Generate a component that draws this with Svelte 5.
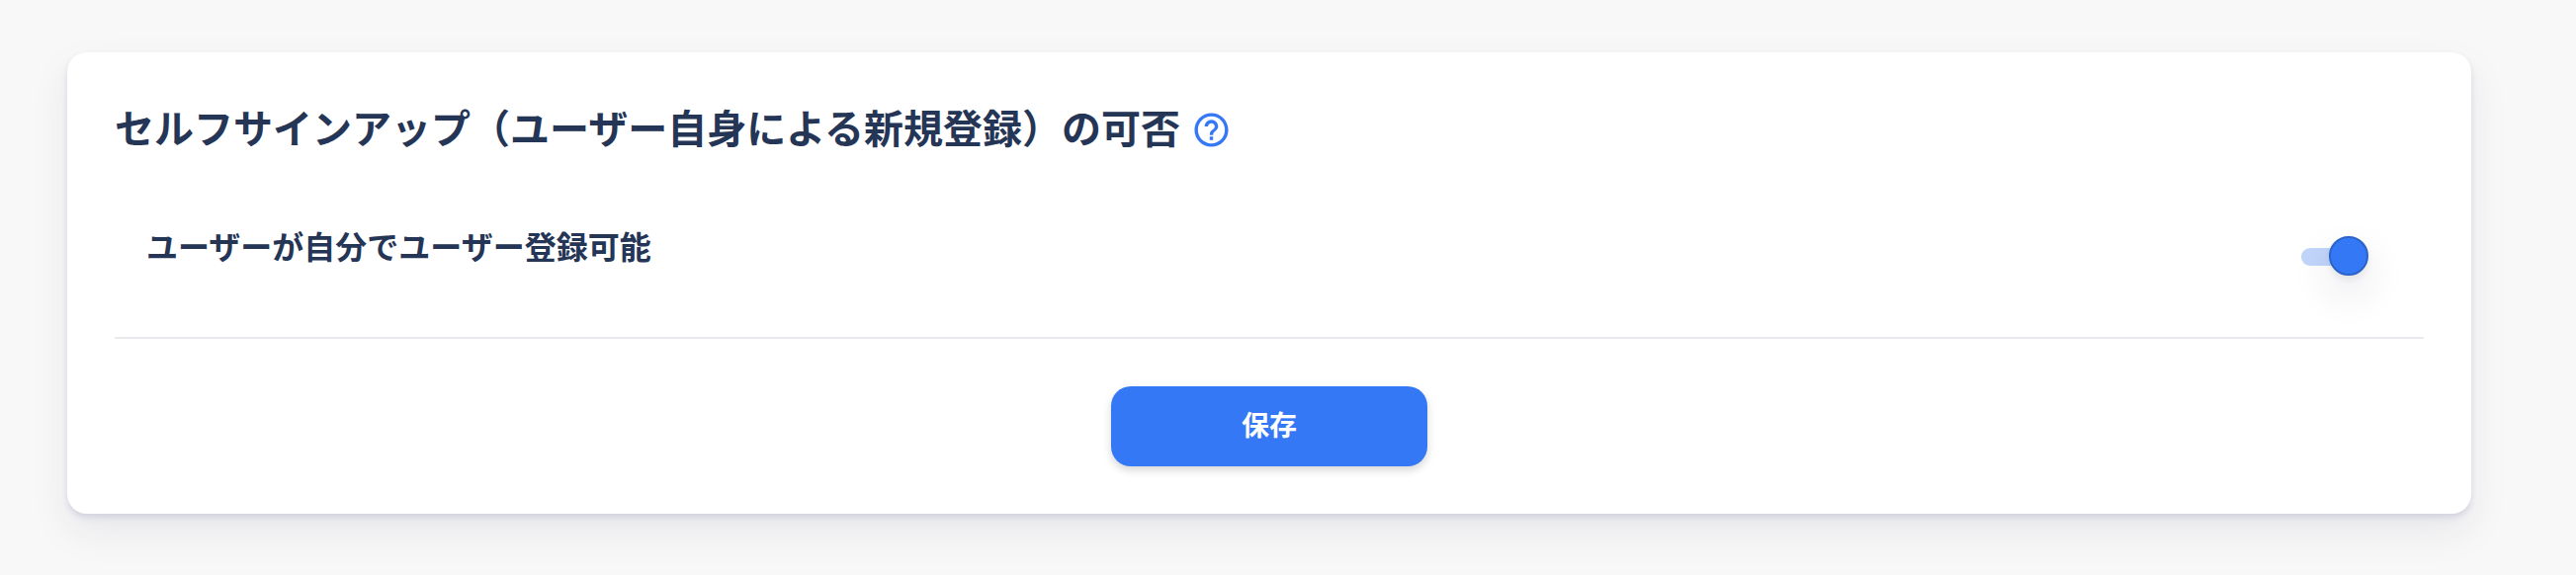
<main>
  <section class="card">
    <header>
      <h1>セルフサインアップ（ユーザー自身による新規登録）の可否</h1>
      <svg class="help" viewBox="0 0 24 24" aria-hidden="true"><path d="M11 18h2v-2h-2v2zm1-16C6.480 2 2 6.480 2 12s4.480 10 10 10 10-4.480 10-10S17.520 2 12 2zm0 18c-4.410 0-8-3.590-8-8s3.590-8 8-8 8 3.590 8 8-3.590 8-8 8zm0-14c-2.210 0-4 1.790-4 4h2c0-1.100.9-2 2-2s2 .9 2 2c0 2-3 1.750-3 5h2c0-2.250 3-2.500 3-5 0-2.210-1.790-4-4-4z"/></svg>
    </header>
    <div class="row">
      <h2>ユーザーが自分でユーザー登録可能</h2>
      <button class="switch" class:on={enabled} role="switch" aria-checked={enabled} aria-label="ユーザー登録" onclick={() => (enabled = !enabled)}>
        <span class="track"></span><span class="thumb"></span>
      </button>
    </div>
    <footer><button class="save">保存</button></footer>
  </section>
</main>

<script>
  let enabled = $state(true);
</script>

<style>
  :global(body) { background: #f8f8f8; }
  main { box-sizing: border-box; height: 582px; padding: 53px 106px 62px 68px; overflow: hidden; color: #253556; font-family: "Noto Sans CJK JP", sans-serif; }
  .card { box-sizing: border-box; height: 467px; padding: 48px; border-radius: 20px; background: #fff; box-shadow: 0 4px 6px rgba(50,50,120,.13), 0 18px 40px rgba(40,40,90,.08); }
  header { display: flex; align-items: center; height: 60px; gap: 11px; }
  h1, h2 { margin: 0; font-weight: 700; white-space: nowrap; }
  h1 { padding-bottom: 6px; font-size: 40px; line-height: 60px; }
  .help { flex: none; width: 41px; height: 41px; fill: #3478f6; }
  .row { display: flex; justify-content: space-between; box-sizing: border-box; height: 182px; padding: 63px 56px 0 32px; border-bottom: 2px solid #e8e9ed; }
  h2 { font-size: 32px; line-height: 48px; }
  .switch { display: flex; align-items: center; width: 68px; height: 40px; margin-top: 15px; padding: 0; border: 0; background: none; }
  .track { width: 68px; height: 18px; margin-top: 2px; border-radius: 9px; background: #c1d4f9; }
  .thumb { box-sizing: border-box; flex: none; width: 40px; height: 40px; margin-left: -40px; border: 2px solid #2b63c8; border-radius: 50%; background: #3478f6; box-shadow: 0 4px 6px rgba(40,40,80,.08), 0 18px 40px rgba(40,40,80,.12); }
  footer { display: flex; justify-content: center; padding-top: 48px; }
  .save { box-sizing: border-box; width: 320px; height: 81px; padding: 0 0 5px; border: 0; border-radius: 20px; background: #3478f6; color: #fff; font: 700 28px "Noto Sans CJK JP", sans-serif; box-shadow: 0 4px 8px rgba(0,0,0,.16); }
</style>
